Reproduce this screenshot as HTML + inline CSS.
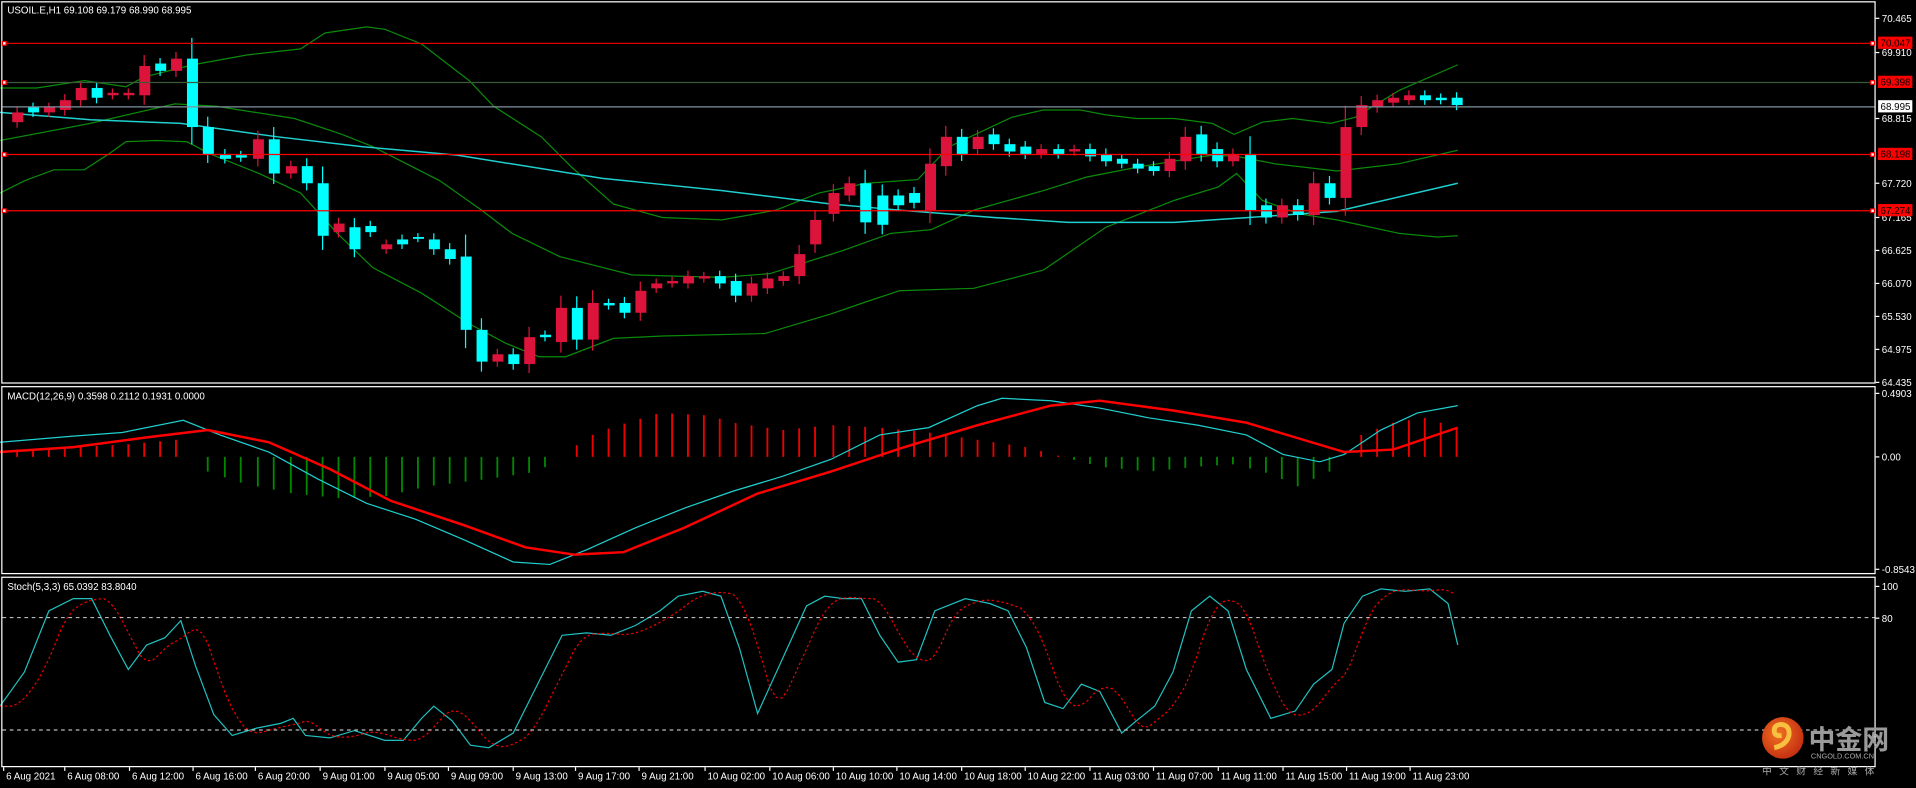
<!DOCTYPE html>
<html><head><meta charset="utf-8"><style>
html,body{margin:0;padding:0;background:#000;overflow:hidden}
svg{display:block}
text{font-family:"Liberation Sans","Noto Sans CJK SC",sans-serif;fill:#fff;font-size:8px}
</style></head><body>
<svg id="s" width="1916" height="788" viewBox="0 0 1568 645" preserveAspectRatio="none" xmlns="http://www.w3.org/2000/svg">
<rect width="1568" height="645" fill="#000"/>
<g id="g"></g>
<g stroke="#fff" stroke-width="1" fill="none">
<rect x="1.5" y="1.5" width="1533" height="312"/>
<rect x="1.5" y="316.5" width="1533" height="153"/>
<rect x="1.5" y="472.5" width="1533" height="155"/>
</g>
<g stroke-width="1">
<line x1="2" y1="35.5" x2="1534" y2="35.5" stroke="#e00000"/>
<line x1="2" y1="67.5" x2="1534" y2="67.5" stroke="#3a5a3a"/>
<line x1="2" y1="87.5" x2="1534" y2="87.5" stroke="#8090a0"/>
<line x1="2" y1="126.5" x2="1534" y2="126.5" stroke="#f00"/>
<line x1="2" y1="172.5" x2="1534" y2="172.5" stroke="#f00"/>
</g>
<g fill="#fff" stroke="#f00">
<rect x="2" y="34" width="3" height="3"/><rect x="2" y="66" width="3" height="3"/><rect x="2" y="125" width="3" height="3"/><rect x="2" y="171" width="3" height="3"/>
<rect x="1531" y="34" width="3" height="3"/><rect x="1531" y="66" width="3" height="3"/><rect x="1531" y="125" width="3" height="3"/><rect x="1531" y="171" width="3" height="3"/>
</g>
<line x1="2" y1="505.5" x2="1534" y2="505.5" stroke="#bbb" stroke-dasharray="3,3"/>
<line x1="2" y1="597.5" x2="1534" y2="597.5" stroke="#bbb" stroke-dasharray="3,3"/>
<g id="ax"></g>
<text x="6" y="11">USOIL.E,H1  69.108 69.179 68.990 68.995</text>
<text x="6" y="327">MACD(12,26,9) 0.3598 0.2112 0.1931 0.0000</text>
<text x="6" y="483">Stoch(5,3,3) 65.0392 83.8040</text>
<defs><radialGradient id="lg" cx="0.4" cy="0.4" r="0.7"><stop offset="0" stop-color="#f07020"/><stop offset="1" stop-color="#c02810"/></radialGradient></defs>
<circle cx="1459" cy="604" r="17" fill="url(#lg)"/>
<path d="M1452 612 q10 -2 12 -10 q1 -8 -6 -9 q-6 0 -6 5 q0 5 6 4" stroke="#f8c040" stroke-width="4" fill="none"/>
<text x="1480" y="613" style="font-size:22px;font-weight:bold;fill:#9a9a9a">中金网</text>
<text x="1482" y="621" style="font-size:6px;fill:#aaa">CNGOLD.COM.CN</text>
<text x="1442" y="634" style="font-size:8px;fill:#aaa;letter-spacing:6px">中文财经新媒体</text>
</svg>
<script>
const NS="http://www.w3.org/2000/svg",g=document.getElementById('g'),ax=document.getElementById('ax');
function el(t,a,p){const e=document.createElementNS(NS,t);for(const k in a)e.setAttribute(k,a[k]);(p||g).appendChild(e);return e;}
function txt(x,y,s,fill,p){const e=el('text',{x:x,y:y},p);e.textContent=s;if(fill)e.style.fill=fill;return e;}
function poly(pts,c,w,d){const a={points:pts.map(p=>p.join(',')).join(' '),fill:'none',stroke:c,'stroke-width':w};if(d)a['stroke-dasharray']=d;el('polyline',a);}
// bands
poly([[0,72],[30,72],[69,66],[103,71],[118,63],[158,53],[202,45],[246,40],[266,27],[300,22],[315,24],[345,36],[384,66],[404,87],[443,112],[468,137],[502,167],[542,178],[591,180],[635,172],[670,158],[709,150],[751,147],[777,120],[828,96],[854,90],[884,90],[905,94],[930,97],[961,97],[992,101],[1010,110],[1033,100],[1058,97],[1089,101],[1109,96],[1145,74],[1193,53]],'#0a8a0a',1);
poly([[0,115],[74,101],[143,85],[177,87],[241,97],[280,110],[305,120],[360,148],[394,172],[419,191],[458,210],[517,225],[591,227],[630,224],[690,205],[729,191],[762,188],[797,172],[854,156],[889,145],[930,137],[966,131],[992,127],[1012,128],[1043,134],[1094,140],[1145,134],[1193,123]],'#0a8a0a',1);
poly([[0,158],[20,148],[44,139],[69,139],[89,126],[103,116],[128,115],[153,116],[172,126],[212,142],[246,158],[276,191],[305,219],[345,240],[384,265],[414,281],[441,292],[463,292],[502,277],[542,275],[626,273],[680,257],[709,247],[736,238],[797,236],[854,221],[905,186],[961,164],[997,153],[1012,142],[1033,164],[1063,175],[1094,180],[1145,191],[1176,194],[1193,193]],'#0a8a0a',1);
poly([[0,92],[74,98],[148,101],[227,112],[296,120],[374,127],[493,146],[591,156],[680,167],[736,172],[813,178],[874,182],[961,182],[1022,178],[1094,173],[1193,150]],'#20d0d0',1.2);
const C=[[14,92,100,'r'],[27,88,92,'c'],[40,88,92,'r'],[53,82,90,'r'],[66,72,82,'r'],[79,72,80,'c'],[92,76,78,'r'],[105,76,78,'r'],[118,54,78,'r'],[131,52,58,'c'],[144,48,58,'r'],[157,48,104,'c'],[170,104,126,'c'],[184,126,130,'c'],[197,127,129,'c'],[211,114,130,'r'],[224,114,142,'c'],[238,136,142,'r'],[251,136,150,'c'],[264,150,193,'c'],[277,183,190,'r'],[290,186,204,'c'],[303,185,190,'c'],[316,200,204,'r'],[329,196,200,'c'],[342,194,195,'c'],[355,196,204,'c'],[368,204,212,'c'],[381,210,270,'c'],[394,270,296,'c'],[407,290,296,'r'],[420,290,298,'c'],[433,276,298,'r'],[446,274,276,'c'],[459,252,280,'r'],[472,252,278,'c'],[485,248,278,'r'],[498,248,250,'c'],[511,248,256,'c'],[524,238,256,'r'],[537,232,236,'r'],[550,230,232,'r'],[563,226,232,'r'],[576,226,228,'r'],[589,226,232,'c'],[602,230,242,'c'],[615,232,242,'r'],[628,228,236,'r'],[641,226,230,'r'],[654,208,226,'r'],[667,180,200,'r'],[682,158,175,'r'],[695,150,160,'r'],[708,150,182,'c'],[722,160,184,'c'],[735,160,168,'c'],[748,158,166,'c'],[761,134,172,'r'],[774,112,136,'r'],[787,112,126,'c'],[800,112,122,'r'],[813,110,118,'c'],[826,118,124,'c'],[839,120,126,'c'],[852,122,126,'r'],[866,122,126,'c'],[879,122,124,'r'],[892,122,128,'c'],[905,126,132,'c'],[918,130,134,'c'],[931,134,138,'c'],[944,136,140,'c'],[957,130,140,'r'],[970,112,132,'r'],[983,110,126,'c'],[996,122,132,'c'],[1009,126,132,'r'],[1023,126,172,'c'],[1036,168,178,'c'],[1049,168,178,'r'],[1062,168,176,'c'],[1075,150,176,'r'],[1088,150,162,'c'],[1101,104,162,'r'],[1114,86,104,'r'],[1127,82,88,'r'],[1140,80,84,'r'],[1153,78,82,'r'],[1166,78,82,'c'],[1179,80,82,'c'],[1192,80,86,'c']];
C.forEach(c=>{const col=c[3]=='r'?'#dc143c':'#00ffff';const h=c[1]-Math.max(3,(c[2]-c[1])*0.25+3),l=c[2]+Math.max(3,(c[2]-c[1])*0.2+3);
el('line',{x1:c[0],y1:h,x2:c[0],y2:l,stroke:col,'stroke-width':1});
el('rect',{x:c[0]-4,y:c[1],width:9,height:Math.max(1.5,c[2]-c[1]),fill:col});});
const H=[[14,368],[100,364],[144,360],[157,374],[170,386],[200,396],[240,404],[280,408],[316,406],[350,398],[400,392],[440,386],[460,374],[480,358],[500,350],[540,338],[580,340],[600,346],[640,352],[680,348],[720,350],[760,354],[800,360],[840,366],[870,374],[900,382],[940,386],[980,382],[1010,380],[1040,388],[1062,398],[1088,386],[1101,374],[1114,356],[1140,346],[1166,342],[1192,350]];
function interp(P,x){for(let i=0;i<P.length-1;i++){if(x>=P[i][0]&&x<=P[i+1][0]){const t=(x-P[i][0])/(P[i+1][0]-P[i][0]);return P[i][1]+t*(P[i+1][1]-P[i][1]);}}return P[P.length-1][1];}
C.forEach(c=>{const y=interp(H,c[0]);if(Math.abs(y-374)<1)return;el('line',{x1:c[0],y1:374,x2:c[0],y2:y,stroke:y<374?'#e00':'#080','stroke-width':1.5});});
poly([[0,362],[60,357],[100,354],[150,344],[180,356],[220,370],[260,392],[300,412],[340,425],[380,442],[420,460],[450,462],[480,450],[520,432],[560,416],[600,402],[640,390],[680,376],[720,356],[760,350],[800,332],[820,326],[860,328],[900,334],[940,342],[980,348],[1020,356],[1050,372],[1080,378],[1100,372],[1130,352],[1160,338],[1193,332]],'#20d0d0',1);
poly([[0,370],[60,366],[120,358],[170,352],[220,362],[270,384],[320,410],[380,430],[430,448],[470,454],[510,452],[560,432],[620,404],[680,386],[740,366],[800,348],[860,332],[900,328],[960,336],[1020,346],[1060,358],[1100,370],[1140,368],[1193,350]],'#f00',2);
const S=[[0,578],[20,550],[40,500],[60,490],[75,490],[90,520],[105,548],[120,528],[135,522],[148,508],[160,545],[175,585],[190,602],[210,596],[230,592],[240,588],[250,602],[270,604],[290,598],[315,606],[330,606],[345,588],[355,578],[370,590],[385,610],[400,612],[420,600],[440,560],[460,520],[480,518],[500,520],[520,512],[540,500],[555,488],[575,484],[590,488],[605,530],[620,584],[640,540],[660,496],[675,488],[690,490],[705,490],[720,520],[735,542],[750,540],[765,500],[790,490],[810,494],[825,500],[840,530],[855,575],[870,580],[885,560],[900,566],[918,600],[930,590],[945,578],[960,550],[975,500],[990,488],[1005,500],[1020,548],[1040,588],[1060,582],[1075,560],[1090,548],[1100,510],[1115,488],[1130,482],[1150,484],[1170,482],[1185,494],[1193,528]];
poly(S,'#20c0c0',1);
const R=[];for(let x=0;x<=1193;x+=5){let s=0;for(let k=0;k<3;k++)s+=interp(S,Math.max(0,x-10-k*6));R.push([x,s/3]);}
poly(R,'#e00',1,'2,2');
[["70.465",15],["69.910",43],["68.815",97],["67.720",150],["67.165",178],["66.625",205],["66.070",232],["65.530",259],["64.975",286],["64.435",313],["0.4903",322],["0.00",374],["-0.8543",466],["100",480],["80",506]].forEach(a=>{el('line',{x1:1535,y1:a[1],x2:1538,y2:a[1],stroke:'#fff'},ax);txt(1540,a[1]+3,a[0],'#fff',ax);});
[["70.047",35,'#f00','#000'],["69.398",67,'#f00','#000'],["68.995",87,'#fff','#000'],["68.198",126,'#f00','#000'],["67.274",172,'#f00','#000']].forEach(a=>{el('rect',{x:1537,y:a[1]-5,width:28,height:10,fill:a[2]},ax);txt(1539,a[1]+3,a[0],a[3],ax);});
[["6 Aug 2021",3],["6 Aug 08:00",53],["6 Aug 12:00",106],["6 Aug 16:00",158],["6 Aug 20:00",209],["9 Aug 01:00",262],["9 Aug 05:00",315],["9 Aug 09:00",367],["9 Aug 13:00",420],["9 Aug 17:00",471],["9 Aug 21:00",523],["10 Aug 02:00",577],["10 Aug 06:00",630],["10 Aug 10:00",682],["10 Aug 14:00",734],["10 Aug 18:00",787],["10 Aug 22:00",839],["11 Aug 03:00",892],["11 Aug 07:00",944],["11 Aug 11:00",997],["11 Aug 15:00",1050],["11 Aug 19:00",1102],["11 Aug 23:00",1154]].forEach(a=>{el('line',{x1:a[1],y1:628,x2:a[1],y2:631,stroke:'#fff'},ax);txt(a[1]+2,638,a[0],'#fff',ax);});
</script>
</body></html>
